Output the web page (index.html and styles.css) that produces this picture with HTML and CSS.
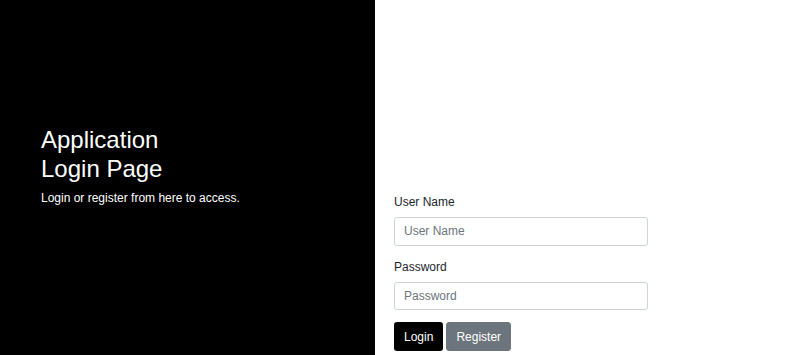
FILE: index.html
```html
<!DOCTYPE html>
<html lang="en">
<head>
    <meta charset="UTF-8">
    <title>Login</title>
    <link rel="stylesheet" href="styles.css">
</head>
<body>
<div class="page">
    <!-- left side -->
    <div class="sidenav">
        <div class="login-main-text">
            <h2>Application<br>Login Page</h2>
            <p>Login or register from here to access.</p>
        </div>
    </div>

    <!-- right side -->
    <div class="main">
        <form class="login-form">
            <div class="form-group">
                <label>User Name</label>
                <input type="text" class="form-control" placeholder="User Name">
            </div>
            <div class="form-group">
                <label>Password</label>
                <input type="password" class="form-control" placeholder="Password">
            </div>
            <button type="submit" class="btn btn-black">Login</button><button type="submit" class="btn btn-secondary">Register</button>
        </form>
    </div>
</div>
</body>
</html>
```

FILE: styles.css
```css
body {
    margin: 0;
    font-family: "Liberation Sans", Arial, sans-serif;
    font-size: 12px;
    line-height: 1.5;
    color: #212529;
    background: #fff;
}

.page {
    display: flex;
    height: 100vh;
}

/* black side panel */
.sidenav {
    width: 375px;
    flex-shrink: 0;
    background-color: #000;
    color: #fff;
}

.login-main-text {
    padding: 126px 0 0 41px;
}

.login-main-text h2 {
    margin: 0 0 5px;
    font-size: 24px;
    font-weight: 400;
    line-height: 1.2;
}

.login-main-text p {
    margin: 0;
}

/* form side */
.main {
    flex: 1;
    padding: 193px 0 0 19px;
}

.login-form {
    width: 254px;
}

.form-group {
    margin-bottom: 12px;
}

.form-group label {
    display: block;
    margin-bottom: 6px;
}

.form-control {
    display: block;
    box-sizing: border-box;
    width: 100%;
    height: 28.5px;
    padding: 4.5px 9px;
    font-family: inherit;
    font-size: 12px;
    line-height: 1.5;
    color: #495057;
    border: 1px solid #ced4da;
    border-radius: 3px;
    background: #fff;
}

.form-control::placeholder {
    color: #6c757d;
}

.btn {
    display: inline-block;
    padding: 4.5px 9px;
    font-family: inherit;
    font-size: 12px;
    line-height: 1.5;
    color: #fff;
    border: 1px solid transparent;
    border-radius: 3px;
    cursor: pointer;
}

.btn + .btn {
    margin-left: 3px;
}

.btn-black {
    background-color: #000;
}

.btn-secondary {
    background-color: #6c757d;
    border-color: #6c757d;
}
```
